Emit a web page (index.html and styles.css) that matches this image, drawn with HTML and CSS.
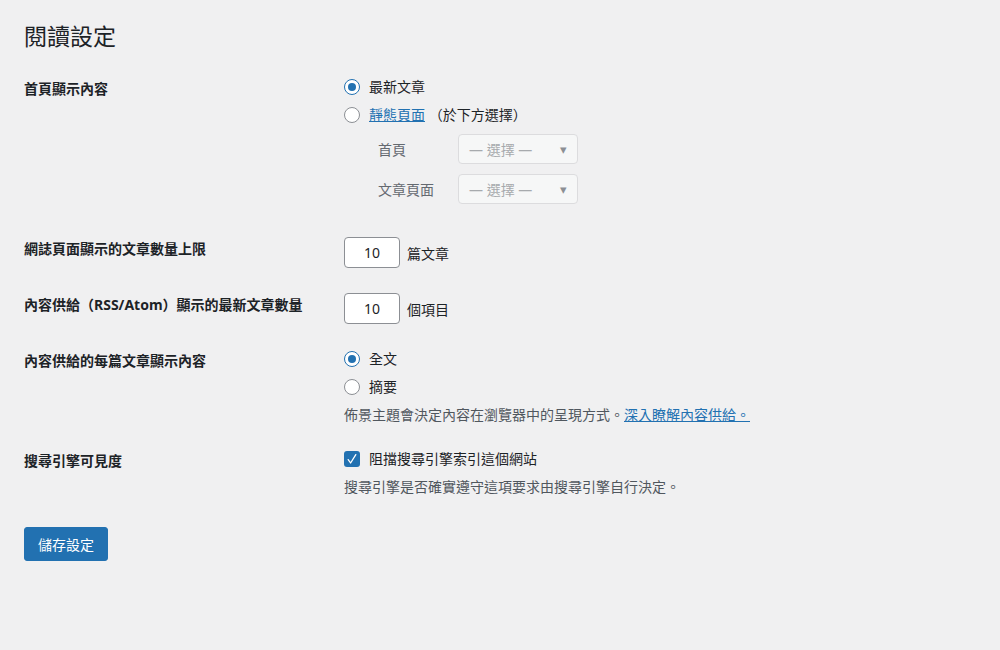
FILE: index.html
```html
<!DOCTYPE html>
<html lang="zh-Hant">
<head>
    <meta charset="UTF-8">
    <meta name="viewport" content="width=device-width, initial-scale=1.0">
    <title>閱讀設定</title>
    <link rel="stylesheet" href="styles.css">
</head>
<body>
    <div class="wrap">
        <h1>閱讀設定</h1>

        <form class="form-table">
            <!-- 首頁顯示內容 -->
            <div class="row row-front">
                <div class="row-label">首頁顯示內容</div>
                <div class="row-field">
                    <label class="choice"><span class="radio checked"></span>最新文章</label>
                    <label class="choice"><span class="radio"></span><a href="#">靜態頁面</a>&nbsp;（於下方選擇）</label>
                    <div class="page-selects">
                        <div class="select-row">
                            <span class="select-label">首頁</span>
                            <span class="select">— 選擇 —<span class="caret">▾</span></span>
                        </div>
                        <div class="select-row">
                            <span class="select-label">文章頁面</span>
                            <span class="select">— 選擇 —<span class="caret">▾</span></span>
                        </div>
                    </div>
                </div>
            </div>

            <!-- 每頁文章數量 -->
            <div class="row row-number">
                <div class="row-label">網誌頁面顯示的文章數量上限</div>
                <div class="row-field inline">
                    <span class="num-input">10</span>篇文章
                </div>
            </div>

            <div class="row row-number row-tight">
                <div class="row-label">內容供給（RSS/Atom）顯示的最新文章數量</div>
                <div class="row-field inline">
                    <span class="num-input">10</span>個項目
                </div>
            </div>

            <!-- 內容供給 -->
            <div class="row row-feed">
                <div class="row-label">內容供給的每篇文章顯示內容</div>
                <div class="row-field">
                    <label class="choice"><span class="radio checked"></span>全文</label>
                    <label class="choice"><span class="radio"></span>摘要</label>
                    <p class="description">佈景主題會決定內容在瀏覽器中的呈現方式。<a href="#">深入瞭解內容供給。</a></p>
                </div>
            </div>

            <!-- 搜尋引擎 -->
            <div class="row row-search">
                <div class="row-label">搜尋引擎可見度</div>
                <div class="row-field">
                    <label class="choice">
                        <span class="checkbox">
                            <svg width="12" height="12" viewBox="0 0 12 12"><path d="M2.2 6.6 L4.6 10 L9.8 1.6" fill="none" stroke="#fff" stroke-width="1.3" stroke-linecap="round" stroke-linejoin="round"/></svg>
                        </span>阻擋搜尋引擎索引這個網站
                    </label>
                    <p class="description">搜尋引擎是否確實遵守這項要求由搜尋引擎自行決定。</p>
                </div>
            </div>

            <div class="submit">
                <button type="button" class="button-primary">儲存設定</button>
            </div>
        </form>
    </div>
</body>
</html>
```

FILE: styles.css
```css
body {
    margin: 0;
    background: #f0f0f1;
    color: #1d2327;
    font-family: "Noto Sans", "Noto Sans CJK TC", sans-serif;
    font-size: 14px;
}

a {
    color: #2271b1;
    text-decoration: underline;
}

.wrap {
    padding: 0 24px;
}

h1 {
    margin: 0;
    padding: 21px 0 0;
    font-size: 23px;
    font-weight: 400;
    line-height: 30px;
}

.form-table {
    margin-top: 22px;
}

.row {
    display: grid;
    grid-template-columns: 320px 1fr;
}

.row-label {
    font-weight: 700;
    line-height: 20px;
    padding-top: 6px;
}

.row-field {
    display: flex;
    flex-direction: column;
}

/* radio / checkbox lines */
.choice {
    display: flex;
    align-items: center;
    height: 28px;
    line-height: 28px;
}

.radio {
    box-sizing: border-box;
    width: 16px;
    height: 16px;
    border: 1px solid #8c8f94;
    border-radius: 50%;
    background: #fff;
    margin-right: 9px;
    position: relative;
}

.radio.checked {
    border-color: #2271b1;
}

.radio.checked::after {
    content: "";
    position: absolute;
    left: 3px;
    top: 3px;
    width: 8px;
    height: 8px;
    border-radius: 50%;
    background: #2271b1;
}

.checkbox {
    box-sizing: border-box;
    width: 16px;
    height: 16px;
    border-radius: 3px;
    background: #2271b1;
    margin-right: 9px;
    display: flex;
    align-items: center;
    justify-content: center;
}

.checkbox svg {
    display: block;
}

/* page selects under the static page option */
.page-selects {
    display: flex;
    flex-direction: column;
    gap: 10px;
    margin-top: 5px;
    padding-left: 34px;
}

.select-row {
    display: flex;
    align-items: center;
}

.select-label {
    width: 80px;
    color: #646970;
}

.select {
    box-sizing: border-box;
    width: 120px;
    height: 30px;
    border: 1px solid #dcdcde;
    border-radius: 4px;
    background: #f6f7f7;
    color: #a7aaad;
    padding: 0 10px;
    display: flex;
    align-items: center;
    justify-content: space-between;
}

.caret {
    font-size: 13px;
    color: #8c8f94;
}

/* number inputs */
.row-field.inline {
    flex-direction: row;
    align-items: center;
}

.num-input {
    box-sizing: border-box;
    width: 56px;
    height: 31px;
    border: 1px solid #8c8f94;
    border-radius: 4px;
    background: #fff;
    display: flex;
    align-items: center;
    justify-content: center;
    margin-right: 7px;
}

.row-number .row-label {
    padding-top: 2px;
}

.description {
    margin: 2px 0 0;
    color: #50575e;
    line-height: 24px;
}

.row-number {
    padding-top: 33px;
}

.row-tight {
    padding-top: 25px;
}

.row-feed {
    padding-top: 21px;
}

.row-search {
    padding-top: 18px;
}

.submit {
    padding-top: 28px;
}

.button-primary {
    font-family: inherit;
    font-size: 14px;
    color: #fff;
    background: #2271b1;
    border: 1px solid #2271b1;
    border-radius: 3px;
    height: 34px;
    padding: 0 13px;
    cursor: pointer;
}
```
